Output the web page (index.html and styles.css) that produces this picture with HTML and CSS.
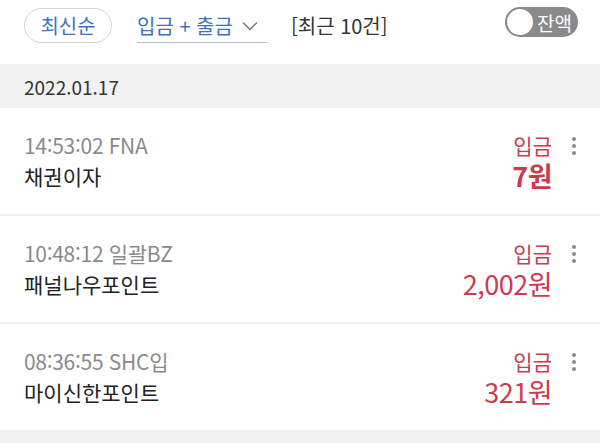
FILE: index.html
```html
<!DOCTYPE html>
<html lang="ko">
<head>
    <meta charset="UTF-8">
    <meta name="viewport" content="width=device-width, initial-scale=1.0">
    <title>거래내역</title>
    <link rel="stylesheet" href="styles.css">
</head>
<body>
    <header class="filtro">
        <span class="filtro__orden">최신순</span>
        <span class="filtro__tipo">입금 + 출금
            <svg class="filtro__flecha" width="16" height="10" viewBox="0 0 16 10"><path d="M1 1.5 L8 8.5 L15 1.5" fill="none" stroke="#777" stroke-width="1.4"/></svg>
        </span>
        <span class="filtro__cuenta">[최근 10건]</span>
        <span class="filtro__saldo"><i class="filtro__saldo__bola"></i>잔액</span>
    </header>

    <div class="fecha">2022.01.17</div>

    <ul class="lista">
        <li class="lista__fila">
            <div class="lista__info">
                <p class="lista__hora">14:53:02 FNA</p>
                <p class="lista__titulo">채권이자</p>
            </div>
            <div class="lista__monto">
                <p class="lista__tipo">입금</p>
                <p class="lista__valor lista__valor--negrita">7원</p>
            </div>
            <span class="lista__menu"><i></i><i></i><i></i></span>
        </li>
        <li class="lista__fila">
            <div class="lista__info">
                <p class="lista__hora">10:48:12 일괄BZ</p>
                <p class="lista__titulo">패널나우포인트</p>
            </div>
            <div class="lista__monto">
                <p class="lista__tipo">입금</p>
                <p class="lista__valor">2,002원</p>
            </div>
            <span class="lista__menu"><i></i><i></i><i></i></span>
        </li>
        <li class="lista__fila">
            <div class="lista__info">
                <p class="lista__hora">08:36:55 SHC입</p>
                <p class="lista__titulo">마이신한포인트</p>
            </div>
            <div class="lista__monto">
                <p class="lista__tipo">입금</p>
                <p class="lista__valor">321원</p>
            </div>
            <span class="lista__menu"><i></i><i></i><i></i></span>
        </li>
    </ul>
</body>
</html>
```

FILE: styles.css
```css
body {
    margin: 0;
    padding: 0;
    font-family: "Noto Sans CJK KR", "Noto Sans", sans-serif;
    background-color: #f2f2f2;
    color: #222;
}
p {
    margin: 0;
}
.filtro {
    height: 64px;
    background-color: #fff;
    display: flex;
    align-items: flex-start;
    padding: 8px 22px 0 24px;
    box-sizing: border-box;
    font-size: 20px;
}
.filtro__orden {
    width: 88px;
    height: 35px;
    box-sizing: border-box;
    border: 1.5px solid #d2d2d2;
    border-radius: 18px;
    color: #3b74c0;
    display: flex;
    align-items: center;
    justify-content: center;
}
.filtro__tipo {
    margin-left: 25px;
    width: 130px;
    height: 35px;
    box-sizing: border-box;
    border-bottom: 1.5px solid #a9c1e0;
    color: #3b74c0;
    display: flex;
    align-items: center;
    gap: 9px;
}
.filtro__flecha {
    margin-top: 2px;
}
.filtro__cuenta {
    margin-left: 24px;
    height: 35px;
    display: flex;
    align-items: center;
    color: #333;
}
.filtro__saldo {
    margin-left: auto;
    margin-top: -1px;
    width: 73px;
    height: 30px;
    border-radius: 15px;
    background-color: #8a8a8a;
    color: #fff;
    font-size: 19px;
    display: flex;
    align-items: center;
    padding: 2px;
    box-sizing: border-box;
    gap: 4px;
}
.filtro__saldo__bola {
    flex-shrink: 0;
    width: 26px;
    height: 26px;
    border-radius: 50%;
    background-color: #fff;
}
.fecha {
    height: 44px;
    padding-left: 24px;
    display: flex;
    align-items: center;
    font-size: 19px;
    color: #333;
}
.lista {
    list-style: none;
    margin: 0;
    padding: 0;
}
.lista__fila {
    height: 106px;
    background-color: #fff;
    margin-bottom: 2px;
    display: flex;
    align-items: center;
    padding: 0 24px 0 24px;
}
.lista__info {
    flex: 1;
}
.lista__hora {
    font-size: 21px;
    color: #8a8a8a;
    line-height: 31px;
    letter-spacing: -0.3px;
}
.lista__titulo {
    font-size: 21px;
    color: #222;
    line-height: 31px;
}
.lista__monto {
    text-align: right;
}
.lista__tipo {
    font-size: 21px;
    color: #cc3b4f;
    line-height: 30px;
}
.lista__valor {
    font-size: 27px;
    color: #cc3b4f;
    line-height: 32px;
    letter-spacing: -0.5px;
}
.lista__valor--negrita {
    font-weight: bold;
}
.lista__menu {
    align-self: flex-start;
    margin-top: 29px;
    margin-left: 20px;
    display: flex;
    flex-direction: column;
    gap: 3px;
}
.lista__menu i {
    width: 4px;
    height: 4px;
    border-radius: 50%;
    background-color: #8a8a8a;
}
```
